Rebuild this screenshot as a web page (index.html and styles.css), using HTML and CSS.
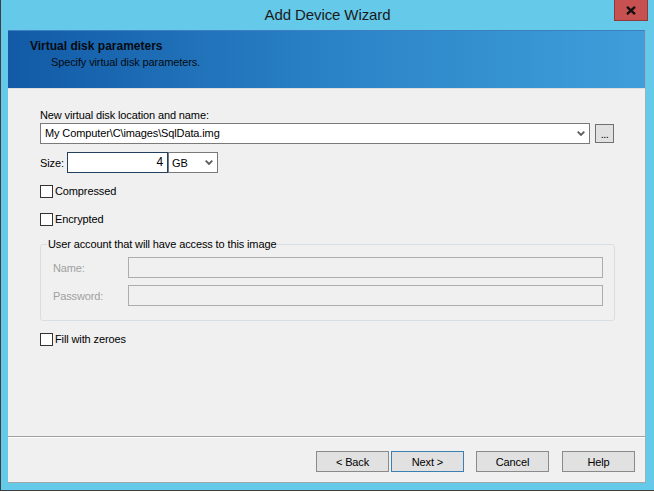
FILE: index.html
```html
<!DOCTYPE html>
<html>
<head>
<meta charset="utf-8">
<title>Add Device Wizard</title>
<link rel="stylesheet" href="styles.css">
</head>
<body>
<div class="window">
  <div class="titlebar">
    <span class="spacer"></span>
    <span class="title">Add Device Wizard</span>
    <span class="close" aria-label="Close">
      <svg width="10" height="9" viewBox="0 0 10 9"><path d="M1 0.8 L9 8.2 M9 0.8 L1 8.2" stroke="#111" stroke-width="2.3" fill="none"/></svg>
    </span>
  </div>
  <div class="client">
    <div class="header">
      <div class="h-title">Virtual disk parameters</div>
      <div class="h-sub">Specify virtual disk parameters.</div>
    </div>
    <div class="content">
      <div class="label">New virtual disk location and name:</div>
      <div class="path-row">
        <div class="combo">
          <span class="combo-text">My Computer\C\images\SqlData.img</span>
          <svg class="chev" width="8" height="5" viewBox="0 0 8 5"><path d="M0.7 0.7 L4 4 L7.3 0.7" stroke="#5c5c5c" stroke-width="1.8" fill="none"/></svg>
        </div>
        <div class="browse">...</div>
      </div>
      <div class="size-row">
        <span class="size-label">Size:</span>
        <div class="num">4</div>
        <div class="unit">
          <span>GB</span>
          <svg class="chev" width="8" height="5" viewBox="0 0 8 5"><path d="M0.7 0.7 L4 4 L7.3 0.7" stroke="#5c5c5c" stroke-width="1.8" fill="none"/></svg>
        </div>
      </div>
      <div class="check c1"><span class="box"></span><span>Compressed</span></div>
      <div class="check c2"><span class="box"></span><span>Encrypted</span></div>
      <fieldset class="group">
        <legend>User account that will have access to this image</legend>
        <div class="grow"><span class="glabel">Name:</span><div class="ginput"></div></div>
        <div class="grow"><span class="glabel">Password:</span><div class="ginput"></div></div>
      </fieldset>
      <div class="check c3"><span class="box"></span><span>Fill with zeroes</span></div>
    </div>
    <div class="footer">
      <button class="btn">&lt; Back</button>
      <button class="btn default">Next &gt;</button>
      <button class="btn cancel">Cancel</button>
      <button class="btn help">Help</button>
    </div>
  </div>
</div>
</body>
</html>
```
FILE: styles.css
```css
* { box-sizing: border-box; }
html, body { margin: 0; padding: 0; }
body {
  background: #ffffff;
  font-family: "Liberation Sans", Arial, sans-serif;
  font-size: 11px;
  letter-spacing: -0.12px;
  color: #000;
  width: 654px;
  height: 492px;
  overflow: hidden;
}
.window {
  width: 654px;
  height: 491px;
  background: #65c9ea;
  border-left: 1px solid #3a3f42;
  border-bottom: 1px solid #3a3f42;
  display: flex;
  flex-direction: column;
}
.titlebar {
  height: 30px;
  flex: none;
  display: grid;
  grid-template-columns: 1fr auto 1fr;
  align-items: start;
}
.title {
  font-size: 15px;
  line-height: 20px;
  margin-top: 5px;
  letter-spacing: -0.1px;
  color: #1b1b1b;
}
.close {
  justify-self: end;
  width: 34px;
  height: 21px;
  margin-right: 6px;
  background: #c75050;
  border: 1px solid #8e3b37;
  border-top: none;
  display: flex;
  align-items: center;
  justify-content: center;
}
.client {
  margin-left: 7px;
  width: 638px;
  height: 453px;
  flex: none;
  background: #f0f0f0;
  border-right: 1px solid #9fb0b8;
  border-bottom: 1px solid #9fa7ab;
  display: flex;
  flex-direction: column;
}
.header {
  height: 59px;
  flex: none;
  background: linear-gradient(to right, #125aa6 0%, #2a82c6 50%, #3f9fda 100%);
  border-top: 1px solid #3d7fc0;
  border-bottom: 1px solid #dedede;
  padding: 7px 0 0 22px;
  color: #050a10;
}
.h-title {
  font-weight: bold;
  font-size: 12px;
  line-height: 16px;
  letter-spacing: 0;
}
.h-sub {
  line-height: 16px;
  margin-left: 21px;
}
.content {
  flex: 1;
  padding: 19px 30px 0 32px;
  display: flex;
  flex-direction: column;
}
.label {
  height: 15px;
  line-height: 15px;
}
.path-row {
  display: flex;
  align-items: flex-start;
  gap: 5px;
}
.combo {
  flex: 1;
  height: 21px;
  border: 1px solid #7a7a7a;
  background: #fff;
  display: flex;
  align-items: center;
  padding: 0 4px 0 4px;
}
.combo-text { flex: 1; line-height: 15px; }
.chev { flex: none; display: block; }
.browse {
  width: 19px;
  height: 19px;
  margin-top: 1px;
  margin-right: 1px;
  border: 1px solid #707070;
  background: #e1e1e1;
  display: flex;
  align-items: flex-end;
  justify-content: center;
  padding-bottom: 2px;
  line-height: 12px;
  letter-spacing: -0.5px;
}
.size-row {
  display: flex;
  align-items: center;
  height: 21px;
  margin-top: 8px;
}
.size-label { width: 27px; }
.num {
  width: 101px;
  height: 21px;
  border: 1px solid #23405f;
  background: #fff;
  text-align: right;
  padding-right: 4px;
  line-height: 18px;
  font-size: 12px;
}
.unit {
  width: 50px;
  height: 21px;
  border: 1px solid #7a7a7a;
  background: #fff;
  display: flex;
  align-items: center;
  justify-content: space-between;
  padding: 0 4px 0 3px;
}
.check {
  display: flex;
  align-items: center;
  height: 15px;
  line-height: 15px;
  gap: 2px;
}
.c1 { margin-top: 11px; }
.c2 { margin-top: 13px; }
.c3 { margin-top: 11px; }
.box {
  width: 13px;
  height: 13px;
  border: 1px solid #333;
  background: #fff;
  flex: none;
}
.group {
  margin: 10px 0 0 0;
  padding: 5px 11px 14px 12px;
  border: 1px solid #d7dfe5;
  border-radius: 3px;
  min-width: 0;
}
.group legend {
  padding: 0 1px;
  margin-left: -6px;
  line-height: 15px;
  color: #000;
}
.grow {
  display: flex;
  align-items: center;
  height: 21px;
}
.grow + .grow { margin-top: 7px; }
.glabel {
  width: 75px;
  flex: none;
  color: #a0a0a0;
}
.ginput {
  flex: 1;
  height: 21px;
  border: 1px solid #adadad;
  background: #f0f0f0;
}
.footer {
  height: 46px;
  flex: none;
  border-top: 1px solid #a0a0a0;
  box-shadow: inset 0 1px 0 #ffffff;
  display: flex;
  justify-content: flex-end;
  align-items: flex-start;
  padding: 14px 10px 0 0;
}
.btn {
  width: 73px;
  height: 21px;
  border: 1px solid #8a8a8a;
  background: #e1e1e1;
  font-family: inherit;
  font-size: 11px;
  letter-spacing: -0.12px;
  color: #000;
  padding: 0;
  margin: 0;
}
.btn.default { border-color: #3c7fb1; margin-left: 2px; }
.btn.cancel { margin-left: 12px; }
.btn.help { margin-left: 13px; }
```
